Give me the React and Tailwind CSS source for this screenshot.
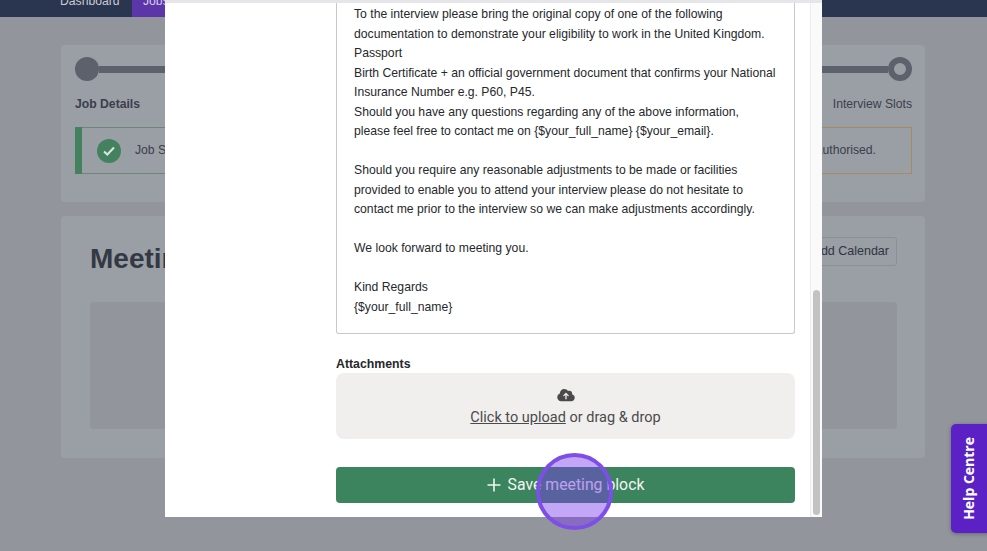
import React from "react";

const sans = "font-['Liberation_Sans',Arial,sans-serif]";

function Backdrop() {
  return (
    <div className="h-[551px] flex flex-col bg-[#92959c] text-[#3a404c]">
      <nav className="h-[17px] shrink-0 bg-[#2a3550] flex overflow-hidden pl-[60px]">
        <span className="text-[12.2px] leading-[17px] -mt-[7px] text-[#c9ccd3] w-[72px]">Dashboard</span>
        <span className="text-[12.2px] leading-[17px] bg-[#5c35a8] text-[#d5cdea] w-[60px] pl-[11px] overflow-hidden"><span className="block -mt-[7px]">Jobs</span></span>
      </nav>
      <div className="flex-1 px-[61px] pr-[62px] pt-[28px] flex flex-col gap-[14px]">
        <section className="h-[157px] bg-[#9a9ea5] rounded-[4px] pl-[14px] pr-[13px] pt-[12px]">
          <div className="flex items-center h-[24px]">
            <div className="w-[24px] h-[24px] rounded-full bg-[#5d616b] shrink-0" />
            <div className="flex-1 h-[7px] bg-[#5d616b]" />
            <div className="w-[24px] h-[24px] rounded-full bg-[#9a9ea5] border-[6px] border-[#5d616b] shrink-0" />
          </div>
          <div className="flex justify-between mt-[14px] text-[12.2px] leading-[18px]">
            <span className="font-bold">Job Details</span>
            <span>Interview Slots</span>
          </div>
          <div className="mt-[14px] h-[47px] flex items-center text-[12.2px]">
            <div className="w-[7px] self-stretch bg-[#44815f] shrink-0" />
            <div className="flex-1 self-stretch flex items-center border-y border-[#6f8578] min-w-0">
              <div className="ml-[15px] w-[24px] h-[24px] rounded-full bg-[#44815f] flex items-center justify-center shrink-0">
                <svg width="12" height="10" viewBox="0 0 12 10" fill="none" stroke="#dfe3e0" strokeWidth="2"><path d="M1 5.500 4.300 8.500 11 1.500" /></svg>
              </div>
              <span className="ml-[14px]">Job Status</span>
            </div>
            <div className="flex-1 self-stretch flex items-center justify-end border border-l-0 border-[#a58a62] min-w-0 pr-[35px]">
              <span>authorised.</span>
            </div>
          </div>
        </section>
        <section className="h-[242px] bg-[#9a9ea5] rounded-[4px] pl-[29px] pr-[28px] pt-[21px]">
          <div className="flex items-center justify-between h-[44px]">
            <h1 className="text-[28px] font-bold text-[#333944]">Meetings</h1>
            <button className="h-[29px] -mt-[15px] pl-[10px] pr-[7px] border border-[#8b8f97] rounded-[3px] text-[12.5px] text-[#2f3540]">Add Calendar</button>
          </div>
          <div className="mt-[21px] h-[127px] bg-[#92959c] rounded-[4px]" />
        </section>
      </div>
    </div>
  );
}

const letter = [
  "To the interview please bring the original copy of one of the following",
  "documentation to demonstrate your eligibility to work in the United Kingdom.",
  "Passport",
  "Birth Certificate + an official government document that confirms your National",
  "Insurance Number e.g. P60, P45.",
  "Should you have any questions regarding any of the above information,",
  "please feel free to contact me on {$your_full_name} {$your_email}.",
  "",
  "Should you require any reasonable adjustments to be made or facilities",
  "provided to enable you to attend your interview please do not hesitate to",
  "contact me prior to the interview so we can make adjustments accordingly.",
  "",
  "We look forward to meeting you.",
  "",
  "Kind Regards",
  "{$your_full_name}",
];

function Modal() {
  return (
    <div className="absolute left-[165px] top-0 w-[657px] h-[517px] bg-white flex overflow-hidden">
      <div className="flex-1 min-w-0 pl-[171px] pr-[15px]">
        <div className="h-[334px] border border-t-0 border-[#c9c9cb] rounded-b-[3px] pl-[17px] pt-[5px] text-[12.2px] leading-[19.5px] text-[#26282c]">
          {letter.map((l, i) => (
            <div key={i} className="h-[19.5px] whitespace-nowrap">{l}</div>
          ))}
        </div>
        <div className="mt-[21px] text-[12.3px] leading-[18px] font-bold text-[#26282c]">Attachments</div>
        <div className="h-[66px] bg-[#f0efee] rounded-[8px] flex flex-col items-center pt-[15px] font-['Roboto',sans-serif] text-[14.5px] leading-[22px] text-[#4a4a4a]">
          <svg width="18" height="14" viewBox="0 0 640 512" fill="#4a4a4a">
            <path d="M144 480C64.500 480 0 415.500 0 336c0-62.800 40.200-116.200 96.200-135.900-.1-2.700-.2-5.400-.2-8.100 0-88.400 71.600-160 160-160 59.300 0 111 32.200 138.700 80.200C409.900 102 428.300 96 448 96c53 0 96 43 96 96 0 12.200-2.300 23.800-6.400 34.600C596 238.400 640 290.100 640 352c0 70.700-57.300 128-128 128H144zm79-217c-9.400 9.400-9.400 24.600 0 33.900s24.600 9.400 33.900 0l39-39V392c0 13.300 10.700 24 24 24s24-10.700 24-24V257.900l39 39c9.400 9.400 24.600 9.400 33.900 0s9.400-24.600 0-33.900l-80-80c-9.400-9.400-24.600-9.400-33.900 0l-80 80z" />
          </svg>
          <div className="mt-[5px]"><span className="underline">Click to upload</span> or drag &amp; drop</div>
        </div>
        <button className="mt-[28px] w-full h-[36px] bg-[#3b845e] rounded-[4px] flex items-center justify-center gap-[7px] font-['Roboto',sans-serif] text-[15.8px] text-[#f1f5f2]">
          <svg width="14" height="14" viewBox="0 0 14 14" stroke="currentColor" strokeWidth="1.6" fill="none"><path d="M7 .5v13M.5 7h13" /></svg>
          Save meeting block
        </button>
      </div>
      <div className="w-[12px] border-l border-[#ececee] bg-[#fafafa] pt-[290px] pl-[2px] shrink-0">
        <div className="w-[7px] h-[225px] bg-[#c2c2c2] rounded-full" />
      </div>
    </div>
  );
}

export default function App() {
  return (
    <div className={`relative w-[987px] h-[551px] overflow-hidden ${sans}`}>
      <Backdrop />
      <Modal />
      <div className="absolute left-[165px] top-0 w-[657px] h-[3px] bg-[#e6e6ea]" />
      <button className="absolute left-[951px] top-[424px] w-[40px] h-[109px] bg-[#5b21c4] rounded-l-[5px] shadow-[0_1px_4px_rgba(0,0,0,0.3)] flex items-center justify-center pr-[5px]">
        <span className="[writing-mode:vertical-rl] rotate-180 font-['Open_Sans',sans-serif] font-bold text-[14px] text-white whitespace-nowrap">Help Centre</span>
      </button>
      <div className="absolute left-[536px] top-[453px] w-[77px] h-[77px] rounded-full bg-[#7c3aed]/45 border-[4px] border-[#7d4fe6]" />
    </div>
  );
}
